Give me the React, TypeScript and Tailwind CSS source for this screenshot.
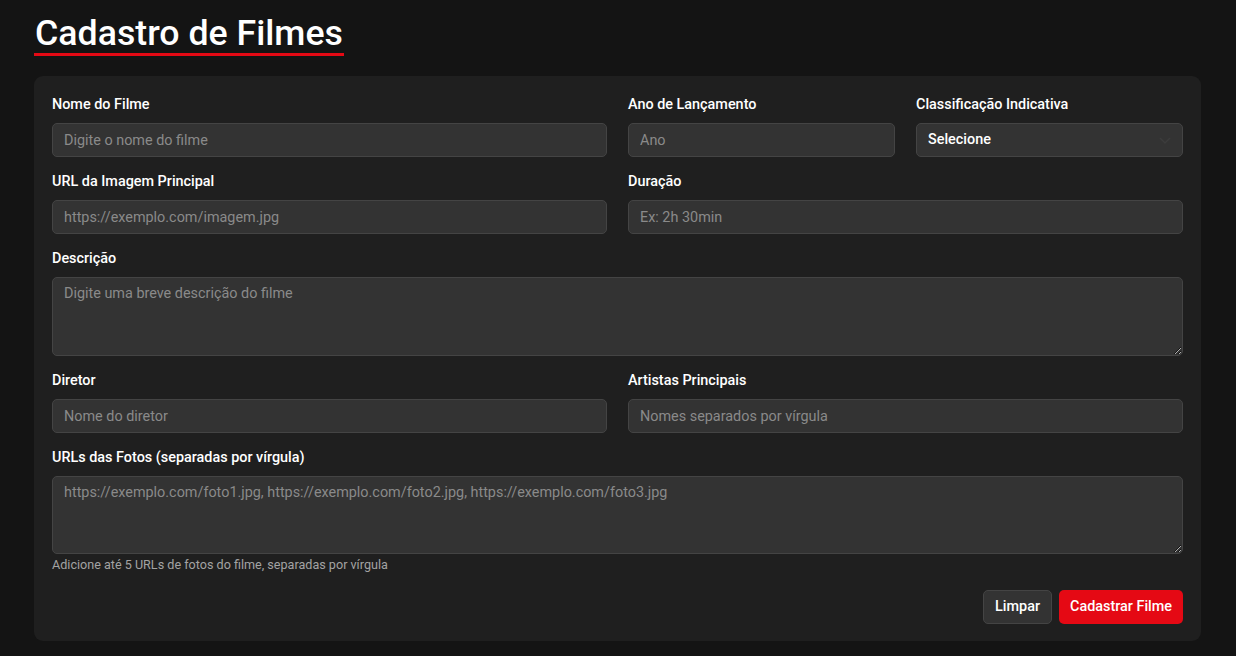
import React from "react";

const inputCls =
  "w-full h-[34px] rounded-[5px] border border-[#444444] bg-[#333333] px-[11px] text-[14.4px] text-white placeholder:text-[#8a8a8a] outline-none";
const textareaCls =
  "w-full rounded-[5px] border border-[#444444] bg-[#333333] px-[11px] py-[6px] text-[14.4px] leading-[20px] text-white placeholder:text-[#8a8a8a] outline-none block";
const labelCls = "block text-[14.4px] leading-[17px] font-medium text-white mb-[10px]";

function Field({ label, span, children }: { label: string; span: string; children: React.ReactNode }) {
  return (
    <div className={span}>
      <label className={labelCls}>{label}</label>
      {children}
    </div>
  );
}

export default function App() {
  return (
    <div
      className="min-h-screen bg-[#141414] pl-[34px] pr-[35px] pt-[14px] pb-[15px]"
      style={{ fontFamily: "Roboto, 'Noto Sans', sans-serif" }}
    >
      <h1 className="inline-block text-[35.7px] leading-[39px] font-medium text-white border-b-[3px] border-[#e50914] pl-[1px] pr-[1px]">
        Cadastro de Filmes
      </h1>
      <div className="mt-[20px] rounded-[9px] bg-[#1f1f1f] px-[18px] pt-[20px] pb-[17px]">
        <div className="grid grid-cols-4 gap-x-[21px] gap-y-[16px]">
          <Field label="Nome do Filme" span="col-span-2">
            <input className={inputCls} placeholder="Digite o nome do filme" />
          </Field>
          <Field label="Ano de Lançamento" span="col-span-1">
            <input className={inputCls} placeholder="Ano" />
          </Field>
          <Field label="Classificação Indicativa" span="col-span-1">
            <div className="relative">
              <select className={inputCls + " appearance-none font-medium"} defaultValue="">
                <option value="">Selecione</option>
              </select>
              <svg
                className="absolute right-[12px] top-[12px] pointer-events-none"
                width="12"
                height="10"
                viewBox="0 0 12 10"
                fill="none"
              >
                <path d="M1 3l5 5 5-5" stroke="#3c3c3c" strokeWidth="1.5" />
              </svg>
            </div>
          </Field>
          <Field label="URL da Imagem Principal" span="col-span-2">
            <input className={inputCls} placeholder="https://exemplo.com/imagem.jpg" />
          </Field>
          <Field label="Duração" span="col-span-2">
            <input className={inputCls} placeholder="Ex: 2h 30min" />
          </Field>
          <Field label="Descrição" span="col-span-4">
            <textarea className={textareaCls + " h-[79px]"} placeholder="Digite uma breve descrição do filme" />
          </Field>
          <Field label="Diretor" span="col-span-2">
            <input className={inputCls} placeholder="Nome do diretor" />
          </Field>
          <Field label="Artistas Principais" span="col-span-2">
            <input className={inputCls} placeholder="Nomes separados por vírgula" />
          </Field>
          <div className="col-span-4">
            <label className={labelCls}>URLs das Fotos (separadas por vírgula)</label>
            <textarea
              className={textareaCls + " h-[78px]"}
              placeholder="https://exemplo.com/foto1.jpg, https://exemplo.com/foto2.jpg, https://exemplo.com/foto3.jpg"
            />
            <p className="mt-[3px] text-[12.6px] leading-[15px] text-[#a3a3a3]">
              Adicione até 5 URLs de fotos do filme, separadas por vírgula
            </p>
          </div>
        </div>
        <div className="mt-[18px] flex justify-end gap-[7px]">
          <button className="h-[34px] rounded-[5px] border border-[#444444] bg-[#333333] px-[11px] text-[14.4px] font-medium text-white">
            Limpar
          </button>
          <button className="h-[34px] rounded-[5px] bg-[#e50914] px-[11px] text-[14.4px] font-medium text-white">
            Cadastrar Filme
          </button>
        </div>
      </div>
    </div>
  );
}
